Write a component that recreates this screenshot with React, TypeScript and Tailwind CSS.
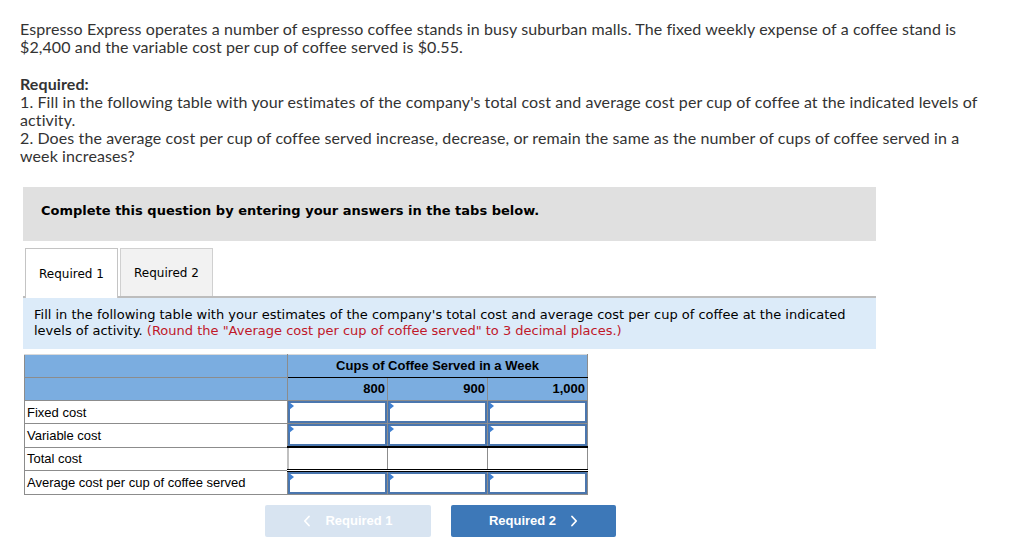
import React from 'react';

const rows = [
  { label: 'Fixed cost', input: true },
  { label: 'Variable cost', input: true },
  { label: 'Total cost', input: false },
  { label: 'Average cost per cup of coffee served', input: true },
];

const levels = ['800', '900', '1,000'];

function InputCell() {
  return (
    <td className="h-[23px] border border-[#8c8c8c] p-0">
      <div className="relative h-[22px] border-2 border-[#4a76ae] bg-white">
        <span className="absolute left-[-1px] top-[-1px] h-0 w-0 border-y-[4px] border-l-[5px] border-y-transparent border-l-[#3f7fd0]" />
      </div>
    </td>
  );
}

function Chevron({ dir }: { dir: 'left' | 'right' }) {
  return (
    <svg width="8" height="12" viewBox="0 0 8 12" fill="none" stroke="currentColor" strokeWidth="1.8" strokeLinecap="round" strokeLinejoin="round">
      {dir === 'left' ? <path d="M6 1.5 1.8 6 6 10.5" /> : <path d="M2 1.5 6.2 6 2 10.5" />}
    </svg>
  );
}

export default function App() {
  return (
    <div className="min-h-[557px] bg-white px-[20px] pt-[20px] text-[#333]">
      <div className="text-[16px] leading-[18px] tracking-[0.1px] text-[#333]" style={{ fontFamily: 'Lato, "Open Sans", sans-serif' }}>
        <p>
          <span className="block whitespace-nowrap">
            Espresso Express operates a number of espresso coffee stands in busy suburban malls. The fixed weekly expense of a coffee stand is
          </span>
          <span className="block">$2,400 and the variable cost per cup of coffee served is $0.55.</span>
        </p>
        <p className="mt-[19px] font-bold">Required:</p>
        <p>
          <span className="block whitespace-nowrap">
            1. Fill in the following table with your estimates of the company's total cost and average cost per cup of coffee at the indicated levels of
          </span>
          <span className="block">activity.</span>
        </p>
        <p>
          <span className="block whitespace-nowrap">
            2. Does the average cost per cup of coffee served increase, decrease, or remain the same as the number of cups of coffee served in a
          </span>
          <span className="block">week increases?</span>
        </p>
      </div>

      <div className="ml-[3px] mt-[22px] w-[853px]" style={{ fontFamily: '"DejaVu Sans", Verdana, sans-serif' }}>
        <div className="h-[54px] bg-[#e0e0e0] pl-[18px] pt-[14px] text-[13px] font-bold text-black">
          Complete this question by entering your answers in the tabs below.
        </div>

        <div className="mt-[7px] flex gap-[2px] pl-[2px]">
          <div className="mb-[-2px] flex h-[50px] w-[93px] items-center justify-center border border-b-0 border-[#c4c4c4] bg-white text-[12px] text-black">
            Required 1
          </div>
          <div className="flex h-[48px] w-[93px] items-center justify-center border border-b-0 border-[#d0d0d0] bg-[#f2f2f2] text-[12px] text-black">
            Required 2
          </div>
        </div>

        <div className="border-t-2 border-[#bdbdbd] bg-[#dcebf9] px-[11px] pb-[10px] pt-[9px] text-[13px] leading-[16px] text-black">
          <span className="block whitespace-nowrap">
            Fill in the following table with your estimates of the company's total cost and average cost per cup of coffee at the indicated
          </span>
          <span className="block whitespace-nowrap">
            levels of activity.{' '}
            <span className="text-[#c0182a]">(Round the "Average cost per cup of coffee served" to 3 decimal places.)</span>
          </span>
        </div>

        <table
          className="ml-[1px] mt-[5px] border-collapse text-[13px] text-black"
          style={{ fontFamily: '"Liberation Sans", Arial, sans-serif' }}
        >
          <colgroup>
            <col className="w-[263px]" />
            <col className="w-[100px]" />
            <col className="w-[100px]" />
            <col className="w-[100px]" />
          </colgroup>
          <thead>
            <tr className="h-[23px] bg-[#7bade0]">
              <th className="border border-[#8c8c8c] border-t-[#d9d9d9]" />
              <th colSpan={3} className="border border-[#8c8c8c] border-t-[#d9d9d9] border-b-black text-center font-bold">
                Cups of Coffee Served in a Week
              </th>
            </tr>
            <tr className="h-[23px] bg-[#7bade0]">
              <th className="border border-[#8c8c8c]" />
              {levels.map((l) => (
                <th key={l} className="border border-[#8c8c8c] border-t-black pr-[2px] text-right font-bold">
                  {l}
                </th>
              ))}
            </tr>
          </thead>
          <tbody>
            {rows.map((r) =>
              r.input ? (
                <tr key={r.label}>
                  <td className="h-[23px] border border-[#8c8c8c] px-[2px] leading-none">{r.label}</td>
                  <InputCell />
                  <InputCell />
                  <InputCell />
                </tr>
              ) : (
                <tr key={r.label}>
                  <td className="h-[23px] border border-r-2 border-[#8c8c8c] border-r-[#c0c0c0] px-[2px] leading-none">{r.label}</td>
                  {levels.map((l) => (
                    <td key={l} className="h-[23px] border border-t-2 border-b-[3px] border-double border-x-[#8c8c8c] border-y-black p-0" />
                  ))}
                </tr>
              ),
            )}
          </tbody>
        </table>

        <div className="ml-[242px] mt-[10px] flex gap-[20px]" style={{ fontFamily: '"Liberation Sans", Arial, sans-serif' }}>
          <div className="flex h-[32px] w-[166px] items-center justify-center gap-[14px] rounded-[2px] bg-[#d8e4f1] text-[13px] font-bold text-white">
            <Chevron dir="left" />
            <span>Required 1</span>
          </div>
          <div className="flex h-[32px] w-[165px] items-center justify-center gap-[14px] rounded-[2px] bg-[#3d78b8] text-[13px] font-bold text-white">
            <span>Required 2</span>
            <Chevron dir="right" />
          </div>
        </div>
      </div>
    </div>
  );
}
